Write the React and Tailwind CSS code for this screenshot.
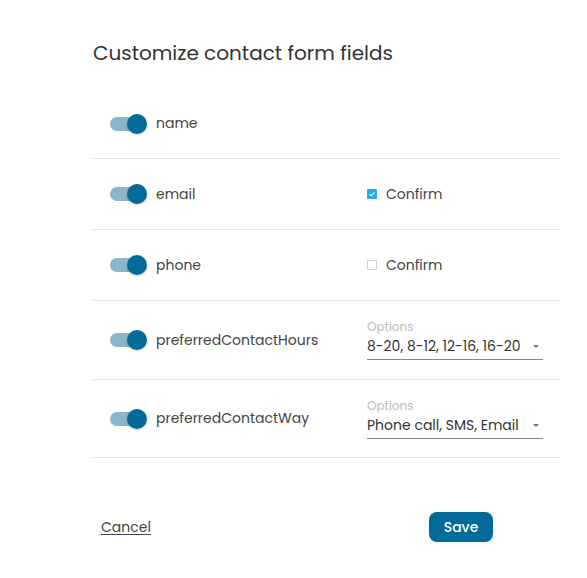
import { useState } from 'react'

const FIELDS = [
  { name: 'name', h: 'h-[70px]' },
  { name: 'email', h: 'h-[71px]', confirm: true },
  { name: 'phone', h: 'h-[71px]', confirm: false },
  { name: 'preferredContactHours', h: 'h-[79px]', options: '8-20, 8-12, 12-16, 16-20' },
  { name: 'preferredContactWay', h: 'h-[78px]', options: 'Phone call, SMS, Email' },
]

function Toggle({ on }) {
  return (
    <div className="relative w-[37px] h-[20px] flex items-center flex-shrink-0">
      <div className={`w-[34px] h-[14px] rounded-full ${on ? 'bg-[#8ab5ca]' : 'bg-gray-300'}`} />
      <div className={`absolute top-0 left-[17px] w-[20px] h-[20px] rounded-full shadow-[0_1px_3px_rgba(0,0,0,0.2)] ${on ? 'bg-[#046a99]' : 'bg-white'}`} />
    </div>
  )
}

function Checkbox({ checked }) {
  return checked ? (
    <div className="w-[10px] h-[10px] rounded-[1px] bg-[#22adf0] flex items-center justify-center">
      <svg viewBox="0 0 10 10" className="w-[8px] h-[8px]">
        <path d="M2 5.2 L4.1 7.2 L8 3" stroke="white" strokeWidth="1.3" fill="none" />
      </svg>
    </div>
  ) : (
    <div className="w-[10px] h-[10px] rounded-[1px] border-[1.5px] border-[#cfcfcf] bg-white" />
  )
}

export default function App() {
  const [fields] = useState(FIELDS)

  return (
    <div className="w-[587px] h-[578px] bg-white font-['Poppins','Open_Sans',sans-serif] text-[#444]">
      <div className="pl-[93px] pt-[39px]">
        <h1 className="text-[20px] leading-[28px] text-[#333] font-normal">Customize contact form fields</h1>

        <div className="mt-[22px] w-[466px]">
          {fields.map(f => (
            <div key={f.name} className={`${f.h} flex items-center border-b border-[#e3e3e3]`}>
              <div className="w-[274px] flex items-center pl-[17px]">
                <Toggle on />
                <span className="ml-[9px] text-[14px]">{f.name}</span>
              </div>
              {f.confirm !== undefined && (
                <label className="flex items-center gap-[9px] text-[14px]">
                  <Checkbox checked={f.confirm} />
                  Confirm
                </label>
              )}
              {f.options && (
                <div className="w-[176px] flex flex-col">
                  <span className="text-[12px] leading-[14px] text-[#bdbdbd]">Options</span>
                  <div className="flex items-center justify-between border-b border-[#8a8a8a] h-[26px]">
                    <span className="text-[14px] text-[#333]">{f.options}</span>
                    <svg viewBox="0 0 6 3" className="w-[6px] h-[3px] mr-[4px]">
                      <path d="M0 0 L6 0 L3 3 Z" fill="#757575" />
                    </svg>
                  </div>
                </div>
              )}
            </div>
          ))}
        </div>

        <div className="mt-[54px] w-[400px] flex items-center justify-between">
          <button className="ml-[8px] text-[14px] text-[#444] underline underline-offset-2">Cancel</button>
          <button className="w-[64px] h-[30px] rounded-[8px] bg-[#046a99] text-white text-[14px] font-medium shadow-[0_1px_4px_rgba(0,0,0,0.08)]">Save</button>
        </div>
      </div>
    </div>
  )
}
